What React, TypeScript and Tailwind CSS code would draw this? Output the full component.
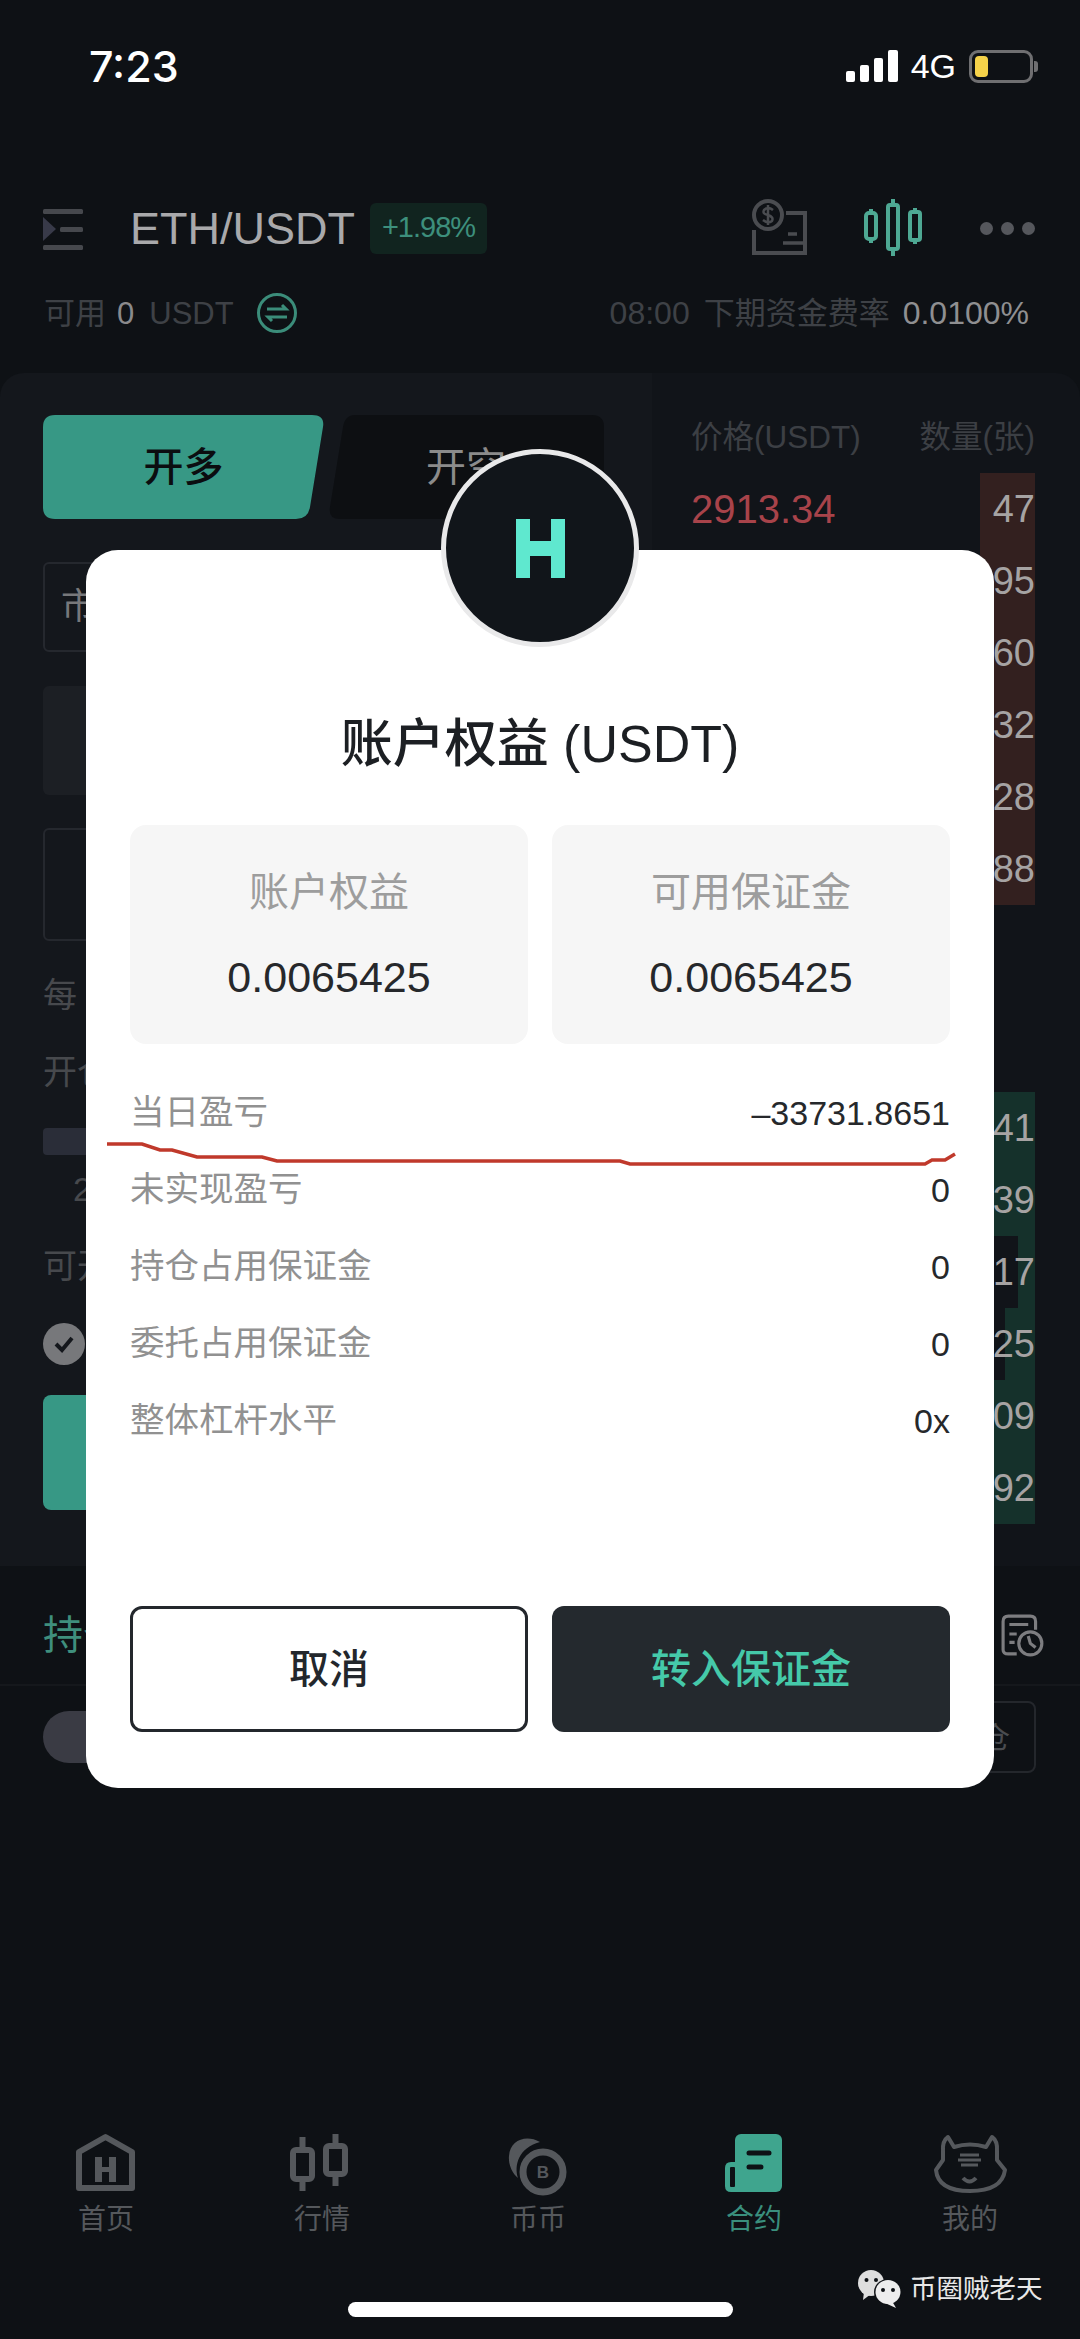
import React from "react";

const askRows = [
  { q: "47", w: "w-[55px]" },
  { q: "95", w: "w-[55px]" },
  { q: "60", w: "w-[55px]" },
  { q: "32", w: "w-[55px]" },
  { q: "28", w: "w-[55px]" },
  { q: "88", w: "w-[55px]" },
];
const bidRows = [
  { q: "41", w: "w-[55px]" },
  { q: "39", w: "w-[55px]" },
  { q: "17", w: "w-[17px]" },
  { q: "25", w: "w-[30px]" },
  { q: "09", w: "w-[55px]" },
  { q: "92", w: "w-[55px]" },
];
const infoRows = [
  ["当日盈亏", "–33731.8651"],
  ["未实现盈亏", "0"],
  ["持仓占用保证金", "0"],
  ["委托占用保证金", "0"],
  ["整体杠杆水平", "0x"],
];

function MenuIcon() {
  return (
    <svg width="44" height="44" viewBox="0 0 44 44" className="shrink-0">
      <rect x="0" y="3" width="40" height="5" rx="1.5" fill="#46484d" />
      <rect x="17" y="21" width="23" height="5" rx="1.5" fill="#46484d" />
      <rect x="0" y="39" width="40" height="5" rx="1.5" fill="#46484d" />
      <path d="M0 11 L13 23 L0 35 Z" fill="#383a49" />
    </svg>
  );
}

function WalletIcon() {
  return (
    <svg width="60" height="60" viewBox="0 0 60 60" fill="none" stroke="#4a4c50" strokeWidth="4">
      <circle cx="18" cy="17" r="14" />
      <path d="M23 12 Q18 8 14 12 Q12 16 18 17 Q24 19 22 23 Q18 26 13 22 M18 7 V27" strokeWidth="2.5" />
      <path d="M36 15 H55 V55 H4 V32" />
      <path d="M38 36 H47 M33 45 H53" strokeWidth="3.5" />
    </svg>
  );
}

function CandleIcon() {
  return (
    <svg width="64" height="60" viewBox="0 0 64 60" fill="none" stroke="#4ea893" strokeWidth="4">
      <rect x="6" y="15" width="10" height="26" rx="3" />
      <path d="M11 11 V15 M11 41 V45" />
      <rect x="28" y="7" width="10" height="44" rx="2" />
      <path d="M33 1 V7 M33 51 V58" />
      <rect x="50" y="14" width="10" height="28" rx="2" />
      <path d="M55 10 V14 M55 42 V46" />
    </svg>
  );
}

function SwapIcon() {
  return (
    <svg width="42" height="42" viewBox="0 0 42 42" fill="none" stroke="#3b8d7a" strokeWidth="3">
      <circle cx="21" cy="21" r="18.5" />
      <path d="M11 17 H30 L26 13 M31 25 H12 L16 29" />
    </svg>
  );
}

function HomeIcon() {
  return (
    <svg width="84" height="64" viewBox="0 0 84 64" fill="none" className="block">
      <path d="M15 20 L41.5 5 L68 20 V56 H15 Z" stroke="#55585c" strokeWidth="6" strokeLinejoin="round" />
      <rect x="31" y="25" width="7" height="25" fill="#55585c" />
      <rect x="45" y="25" width="7" height="25" fill="#55585c" />
      <rect x="31" y="35" width="21" height="5" fill="#55585c" />
    </svg>
  );
}

function MarketIcon() {
  return (
    <svg width="84" height="64" viewBox="0 0 84 64" fill="none" stroke="#55585c" strokeWidth="6" className="block">
      <rect x="13" y="18" width="19" height="29" rx="3" />
      <path d="M22.5 5 V15 M22.5 50 V59" />
      <rect x="46" y="14" width="19" height="28" rx="3" />
      <path d="M55.5 2 V11 M55.5 45 V54" />
    </svg>
  );
}

function CoinIcon() {
  return (
    <svg width="84" height="64" viewBox="0 0 84 64" fill="none" className="block">
      <path d="M44 10 C30 2 14 8 13 24 C12 33 17 42 22 46 C18 34 22 16 44 10 Z" fill="#55585c" />
      <circle cx="47" cy="40" r="20" stroke="#55585c" strokeWidth="7" />
      <text x="47" y="46" textAnchor="middle" fontSize="17" fontWeight="700" fill="#55585c" fontFamily="Liberation Sans">B</text>
    </svg>
  );
}

function ContractIcon() {
  return (
    <svg width="84" height="64" viewBox="0 0 84 64" fill="none" className="block">
      <rect x="23" y="2" width="47" height="58" rx="6" fill="#3fa58e" />
      <path d="M30 30 H19 Q13 30 13 36 V54 Q13 60 19 60 H30 Z" fill="#3fa58e" />
      <rect x="18" y="35" width="5" height="20" rx="1" fill="#0e1115" />
      <path d="M37 21 H57 M37 35 H49" stroke="#0e1115" strokeWidth="5" strokeLinecap="round" />
    </svg>
  );
}

function TigerIcon() {
  return (
    <svg width="84" height="64" viewBox="0 0 84 64" fill="none" className="block" stroke="#55585c" strokeWidth="4" strokeLinejoin="round">
      <path d="M26 15 Q42 10 58 15 L64 5 Q70 9 69 20 L69 28 L77 38 Q74 59 42 59 Q10 59 8 38 L15 28 L15 20 Q14 9 20 5 Z" />
      <path d="M32 23 H51 M30 28 H53 M33 33 H50" strokeWidth="3" />
      <path d="M35 46 Q41.5 53 48 46" strokeWidth="4" />
    </svg>
  );
}

function HistoryIcon() {
  return (
    <svg width="44" height="44" viewBox="0 0 42 42" fill="none" stroke="#7d7d80" strokeWidth="3" className="shrink-0">
      <path d="M33 16 V8 Q33 3 28 3 H7 Q2 3 2 8 V35 Q2 39 7 39 H15" />
      <path d="M8 11 H26 M8 20 H15 M8 28 H13" />
      <circle cx="28" cy="29" r="11" />
      <path d="M26 22 L28 29 L33 33" />
    </svg>
  );
}

function WechatIcon() {
  return (
    <svg width="44" height="38" viewBox="0 0 44 38" className="shrink-0">
      <ellipse cx="13" cy="13" rx="13" ry="13" fill="#dedede" />
      <path d="M6 22 L5 30 L13 24 Z" fill="#dedede" />
      <circle cx="8.5" cy="10" r="2" fill="#0e1115" />
      <circle cx="18" cy="10" r="2" fill="#0e1115" />
      <ellipse cx="30" cy="22" rx="14" ry="13" fill="#0e1115" />
      <ellipse cx="30" cy="22" rx="12.5" ry="12" fill="#ededed" />
      <path d="M34 31 L38 38 L27 33 Z" fill="#ededed" />
      <circle cx="25" cy="20" r="2" fill="#0e1115" />
      <circle cx="35" cy="20" r="2" fill="#0e1115" />
    </svg>
  );
}

function RedLine() {
  return (
    <svg width="907" height="40" viewBox="0 0 907 40" fill="none" className="absolute left-0 top-[588px]">
      <path
        d="M21 6 H56 L74 12 H86 L111 19 H176 L191 23 H534 L544 26 H839 L846 22 H859 L869 16"
        stroke="#c0392b"
        strokeWidth="3.5"
      />
    </svg>
  );
}

function LogoBadge() {
  return (
    <div className="absolute left-[355px] top-[-101px] flex h-[198px] w-[198px] items-center justify-center rounded-full border-[5px] border-[#e9e9ea] bg-[#11151a]">
      <svg width="49" height="59" viewBox="0 0 49 59">
        <path d="M0 0 H14 V22 H35 V0 H49 V59 H35 V37 H14 V59 H0 Z" fill="#5fe8cf" />
      </svg>
    </div>
  );
}

function Modal() {
  return (
    <div className="absolute left-[86px] top-[550px] flex h-[1238px] w-[908px] flex-col rounded-[32px] bg-white">
      <LogoBadge />
      <RedLine />
      <h2 className="mt-[164px] flex h-[60px] items-center justify-center text-[52px] font-medium leading-none text-[#1c1f23]">
        账户权益 (USDT)
      </h2>
      <div className="mt-[51px] flex gap-[24px] px-[44px]">
        {["账户权益", "可用保证金"].map((label) => (
          <div key={label} className="flex h-[219px] w-[398px] flex-col items-center rounded-[16px] bg-[#f6f6f6] pt-[42px]">
            <div className="flex h-[50px] items-center text-[40px] leading-none text-[#9d9d9d]">{label}</div>
            <div className="mt-[35px] flex h-[50px] items-center text-[43px] leading-none text-[#26282b]">0.0065425</div>
          </div>
        ))}
      </div>
      <div className="mt-[30px] flex flex-col px-[44px]">
        {infoRows.map(([label, value]) => (
          <div key={label} className="flex h-[77px] items-center justify-between">
            <span className="text-[34.5px] leading-none text-[#919191]">{label}</span>
            <span className="text-[34px] leading-none text-[#26282b]">{value}</span>
          </div>
        ))}
      </div>
      <div className="mt-auto flex gap-[24px] px-[44px] pb-[56px]">
        <button className="flex h-[126px] w-[398px] items-center justify-center rounded-[12px] border-[3px] border-[#23272c] bg-white text-[40px] font-medium text-[#23272c]">
          取消
        </button>
        <button className="flex h-[126px] w-[398px] items-center justify-center rounded-[12px] bg-[#24292e] text-[40px] font-medium text-[#45c9a9]">
          转入保证金
        </button>
      </div>
    </div>
  );
}

function TradeColumn() {
  return (
    <div className="flex w-[652px] shrink-0 flex-col rounded-tl-[24px] bg-[#14171c] pl-[43px] pr-[48px] pt-[42px]">
      <div className="flex h-[104px] gap-[4px]">
        <div className="flex h-[104px] w-[281px] items-center justify-center bg-[#379885] text-[40px] font-medium text-[#0b0d10] [clip-path:path('M12_0_H269_Q282_0_280_12_L267_92_Q265_104_253_104_H12_Q0_104_0_92_V12_Q0_0_12_0Z')]">
          开多
        </div>
        <div className="flex h-[104px] w-[276px] items-center justify-center bg-[#0d0f12] text-[40px] text-[#8b8b8b] [clip-path:path('M27_0_H264_Q276_0_276_12_V92_Q276_104_264_104_H12_Q0_104_2_92_L15_12_Q17_0_27_0Z')]">
          开空
        </div>
      </div>
      <div className="mt-[43px] flex h-[90px] items-center rounded-[6px] border-2 border-[#25282e] pl-[16px] text-[36px] text-[#77787b]">市价</div>
      <div className="mt-[34px] h-[109px] rounded-[6px] bg-[#1c1f24]" />
      <div className="mt-[33px] h-[113px] rounded-[6px] border-2 border-[#25282e]" />
      <div className="mt-[32px] flex h-[44px] items-center text-[34px] text-[#47494d]">每</div>
      <div className="mt-[33px] flex h-[44px] items-center text-[34px] text-[#47494d]">开仓</div>
      <div className="mt-[34px] h-[27px] rounded-[4px] bg-[#2a2d38]" />
      <div className="mt-[12px] flex h-[44px] items-center pl-[30px] text-[34px] text-[#47494d]">2</div>
      <div className="mt-[33px] flex h-[44px] items-center text-[34px] text-[#47494d]">可开</div>
      <div className="mt-[35px] flex h-[42px] w-[42px] items-center justify-center rounded-full bg-[#77787b]">
        <svg width="24" height="24" viewBox="0 0 24 24" fill="none" stroke="#14171c" strokeWidth="4">
          <path d="M4 12 L10 18 L20 6" />
        </svg>
      </div>
      <div className="mt-[30px] h-[115px] rounded-[8px] bg-[#379885]" />
    </div>
  );
}

function BookRow({ q, w, bar }: { q: string; w: string; bar: string }) {
  return (
    <div className="flex h-[72px] justify-end">
      <div className={`flex h-[72px] items-center justify-end text-[38px] leading-none text-[#a6a3a3] ${w} ${bar}`}>{q}</div>
    </div>
  );
}

function BookColumn() {
  return (
    <div className="flex min-w-0 flex-1 flex-col rounded-tr-[24px] bg-[#111419] pl-[39px] pr-[45px]">
      <div className="flex h-[100px] items-end justify-between pb-[20px] text-[31.5px] leading-none text-[#3c3f44]">
        <span>价格(USDT)</span>
        <span>数量(张)</span>
      </div>
      <div className="relative">
        <span className="absolute left-0 top-[14px] text-[40px] leading-[44px] text-[#a8434a]">2913.34</span>
        {askRows.map((r) => (
          <BookRow key={r.q} q={r.q} w={r.w} bar="bg-[#33201f]" />
        ))}
      </div>
      <div className="h-[187px]" />
      <div>
        {bidRows.map((r) => (
          <BookRow key={r.q} q={r.q} w={r.w} bar="bg-[#15312b]" />
        ))}
      </div>
    </div>
  );
}

export default function App() {
  return (
    <div className="relative flex h-[2339px] w-[1080px] flex-col overflow-hidden bg-[#0e1115] font-['Liberation_Sans','Noto_Sans_CJK_SC',sans-serif]">
      <div className="flex h-[132px] shrink-0 items-center justify-between pl-[89px] pr-[42px]">
        <span className="font-['Inter',sans-serif] text-[43px] font-medium leading-none text-white">7:23</span>
        <div className="flex items-center">
          <div className="flex h-[32px] items-end gap-[5px]">
            <div className="h-[11px] w-[9px] rounded-[2px] bg-white" />
            <div className="h-[17px] w-[9px] rounded-[2px] bg-white" />
            <div className="h-[24px] w-[9px] rounded-[2px] bg-white" />
            <div className="h-[32px] w-[10px] rounded-[2px] bg-white" />
          </div>
          <span className="ml-[13px] text-[34px] leading-none text-white">4G</span>
          <div className="ml-[13px] flex h-[33px] w-[64px] items-center rounded-[9px] border-[3px] border-[#6f6f71] px-[3px]">
            <div className="h-[21px] w-[13px] rounded-[4px] bg-[#f5d24a]" />
          </div>
          <div className="ml-[1px] h-[11px] w-[4px] rounded-r-[3px] bg-[#6f6f71]" />
        </div>
      </div>

      <div className="mt-[50px] flex h-[92px] shrink-0 items-center justify-between pl-[43px] pr-[45px]">
        <div className="flex items-center">
          <MenuIcon />
          <span className="ml-[43px] text-[45px] leading-none text-[#a9a9ab]">ETH/USDT</span>
          <span className="ml-[15px] flex h-[51px] w-[117px] items-center justify-center rounded-[6px] bg-[#11241f] text-[29px] tracking-[-1px] text-[#3d8f7c]">+1.98%</span>
        </div>
        <div className="flex items-center">
          <WalletIcon />
          <div className="ml-[50px]">
            <CandleIcon />
          </div>
          <div className="ml-[56px] flex gap-[8px]">
            <div className="h-[13px] w-[13px] rounded-full bg-[#55575c]" />
            <div className="h-[13px] w-[13px] rounded-full bg-[#55575c]" />
            <div className="h-[13px] w-[13px] rounded-full bg-[#55575c]" />
          </div>
        </div>
      </div>

      <div className="flex h-[78px] shrink-0 items-center justify-between pl-[44px] pr-[51px] text-[31px] leading-none text-[#3e4146]">
        <div className="flex items-center">
          <span>可用</span>
          <span className="ml-[11px] text-[#8a8a8c]">0</span>
          <span className="ml-[15px]">USDT</span>
          <span className="ml-[22px]">
            <SwapIcon />
          </span>
        </div>
        <div className="flex items-center">
          <span className="text-[32px]">08:00</span>
          <span className="ml-[14px]">下期资金费率</span>
          <span className="ml-[13px] text-[32px] text-[#8f8f91]">0.0100%</span>
        </div>
      </div>

      <div className="mt-[21px] flex h-[1193px] shrink-0">
        <TradeColumn />
        <BookColumn />
      </div>

      <div className="flex h-[120px] shrink-0 items-center justify-between border-b-2 border-[#15181c] pl-[43px] pr-[35px] pt-[20px]">
        <span className="text-[40px] leading-none text-[#3f8f7d]">持仓</span>
        <HistoryIcon />
      </div>
      <div className="flex h-[90px] shrink-0 items-center justify-between pl-[43px] pr-[44px] pt-[12px]">
        <div className="h-[52px] w-[120px] rounded-full bg-[#3a3b44]" />
        <div className="flex h-[72px] w-[90px] items-center rounded-[8px] border-2 border-[#24272c] pl-[2px] text-[30px] text-[#4a4c50]">
          平仓
        </div>
      </div>

      <div className="mt-auto ml-[-2px] grid w-[1080px] shrink-0 grid-cols-5">
        {[
          { label: "首页", icon: <HomeIcon />, cls: "text-[#55585c]" },
          { label: "行情", icon: <MarketIcon />, cls: "text-[#55585c]" },
          { label: "币币", icon: <CoinIcon />, cls: "text-[#55585c]" },
          { label: "合约", icon: <ContractIcon />, cls: "text-[#3a8f7d]" },
          { label: "我的", icon: <TigerIcon />, cls: "text-[#55585c]" },
        ].map((n) => (
          <div key={n.label} className="flex flex-col items-center">
            {n.icon}
            <span className={`mt-[9px] h-[30px] text-[28px] leading-[30px] ${n.cls}`}>{n.label}</span>
          </div>
        ))}
      </div>
      <div className="flex h-[104px] shrink-0 flex-col items-center justify-end pb-[22px]">
        <div className="h-[15px] w-[385px] rounded-full bg-white" />
      </div>

      <div className="absolute left-[858px] top-[2270px] flex items-center gap-[8px]">
        <WechatIcon />
        <span className="text-[26.5px] leading-none text-[#e8e8e8]">币圈贼老天</span>
      </div>

      <Modal />
    </div>
  );
}
